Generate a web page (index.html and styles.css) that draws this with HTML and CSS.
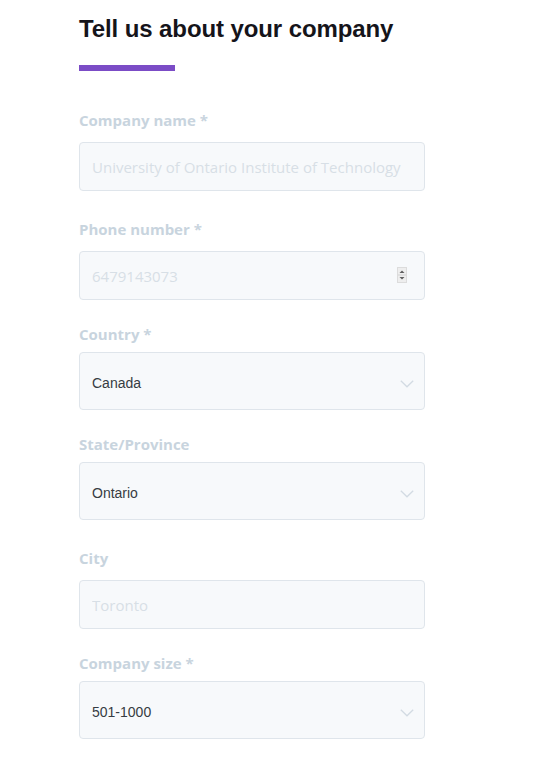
FILE: index.html
```html
<!DOCTYPE html>
<html lang="en">
<head>
<meta charset="utf-8">
<title>Tell us about your company</title>
<link rel="stylesheet" href="styles.css">
</head>
<body>
<main class="page">
  <h1 class="title">Tell us about your company</h1>
  <div class="accent"></div>

  <form class="form">
    <div class="group group-input group-first">
      <label class="label" for="cname">Company name *</label>
      <div class="box">
        <input id="cname" class="field" type="text" placeholder="University of Ontario Institute of Technology" readonly>
      </div>
    </div>

    <div class="group group-input">
      <label class="label" for="phone">Phone number *</label>
      <div class="box">
        <input id="phone" class="field" type="text" placeholder="6479143073" readonly>
        <svg class="spinner" width="10" height="16" viewBox="0 0 10 16" aria-hidden="true">
          <rect x="0.5" y="0.5" width="9" height="15" fill="#eeeeee" stroke="#dcdcdc"/>
          <line x1="1" y1="8" x2="9" y2="8" stroke="#d2d2d2"/>
          <polygon points="5,3.5 7.5,6 2.5,6" fill="#5e5e5e"/>
          <polygon points="2.5,10 7.5,10 5,12.5" fill="#5e5e5e"/>
        </svg>
      </div>
    </div>

    <div class="group group-select">
      <label class="label">Country *</label>
      <div class="box box-select">
        <span class="value">Canada</span>
        <svg class="chevron" width="14" height="8" viewBox="0 0 14 8" aria-hidden="true"><polyline points="0.8,0.8 7,6.8 13.2,0.8" fill="none" stroke="#d3dbe3" stroke-width="1.3"/></svg>
      </div>
    </div>

    <div class="group group-select">
      <label class="label">State/Province</label>
      <div class="box box-select">
        <span class="value">Ontario</span>
        <svg class="chevron" width="14" height="8" viewBox="0 0 14 8" aria-hidden="true"><polyline points="0.8,0.8 7,6.8 13.2,0.8" fill="none" stroke="#d3dbe3" stroke-width="1.3"/></svg>
      </div>
    </div>

    <div class="group group-input">
      <label class="label" for="city">City</label>
      <div class="box">
        <input id="city" class="field" type="text" placeholder="Toronto" readonly>
      </div>
    </div>

    <div class="group group-select">
      <label class="label">Company size *</label>
      <div class="box box-select">
        <span class="value">501-1000</span>
        <svg class="chevron" width="14" height="8" viewBox="0 0 14 8" aria-hidden="true"><polyline points="0.8,0.8 7,6.8 13.2,0.8" fill="none" stroke="#d3dbe3" stroke-width="1.3"/></svg>
      </div>
    </div>
  </form>
</main>
</body>
</html>
```

FILE: styles.css
```css
html, body {
  margin: 0;
  padding: 0;
  background: #ffffff;
}

.page {
  width: 346px;
  margin-left: 79px;
  padding-top: 15px;
}

.title {
  margin: 0;
  font-family: "Liberation Sans", Arial, sans-serif;
  font-weight: 700;
  font-size: 24px;
  line-height: 28px;
  letter-spacing: -0.1px;
  color: #15141a;
  white-space: nowrap;
}

.accent {
  width: 96px;
  height: 6px;
  margin-top: 22px;
  background: #7b4cc6;
}

.form {
  display: flex;
  flex-direction: column;
  margin-top: 40px;
}

.group {
  display: flex;
  flex-direction: column;
}

.group-input {
  margin-top: 29px;
}

.group-select {
  margin-top: 25px;
}

.group-first {
  margin-top: 0;
}

.label {
  font-family: "Open Sans", "Noto Sans", sans-serif;
  font-weight: 700;
  font-size: 15px;
  line-height: 18px;
  color: #c8d4de;
}

.group-input .label {
  margin-bottom: 13px;
}

.group-select .label {
  margin-bottom: 9px;
}

.box {
  position: relative;
  display: flex;
  align-items: center;
  box-sizing: border-box;
  height: 49px;
  border: 1px solid #dfe5eb;
  border-radius: 4px;
  background: #f7f9fb;
}

.field {
  flex: 1;
  min-width: 0;
  height: 100%;
  box-sizing: border-box;
  margin: 0;
  padding: 0 12px;
  border: 0;
  outline: none;
  background: transparent;
  font-family: "Open Sans", "Noto Sans", sans-serif;
  font-size: 15px;
  color: #333333;
}

.field::placeholder {
  color: #d7dfe6;
  opacity: 1;
}

.spinner {
  position: absolute;
  right: 17px;
  top: 15px;
}

.box-select {
  height: 58px;
  padding: 4px 10px 0 12px;
  justify-content: space-between;
}

.value {
  font-family: "Liberation Sans", Arial, sans-serif;
  font-size: 14px;
  line-height: 16px;
  color: #363c42;
}

.chevron {
  display: block;
  margin-top: 2px;
}
```
